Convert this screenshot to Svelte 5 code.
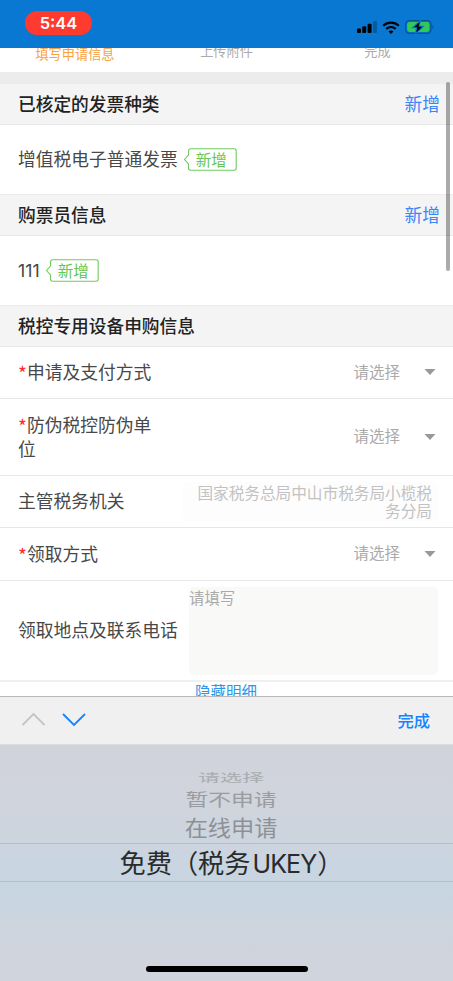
<script lang="ts">
	interface Section {
		title: string;
		item?: string;
	}

	interface Option {
		text: string;
		latin?: string;
		end?: string;
		level: string;
	}

	const sections: Section[] = [
		{ title: "已核定的发票种类", item: "增值税电子普通发票" },
		{ title: "购票员信息", item: "111" },
	];

	const options: Option[] = [
		{ text: "请选择", level: "far" },
		{ text: "暂不申请", level: "mid" },
		{ text: "在线申请", level: "near" },
		{ text: "免费（税务", latin: "UKEY", end: "）", level: "current" },
	];

	let selected = $state(3);
</script>

{#snippet selectRow(label: string, tall: boolean)}
	<div class="row" class:tall>
		<div class="label narrow"><span class="required">*</span>{label}</div>
		<div class="select">
			<span>请选择</span>
			<svg width="12" height="6" viewBox="0 0 12 6"><path d="M0.5 0h11L6 6z" fill="#999" /></svg>
		</div>
	</div>
{/snippet}

<div class="screen">
	<header class="status">
		<span class="time">5:44</span>
		<div class="indicators">
			<svg width="20" height="12" viewBox="0 0 20 12">
				<rect x="0" y="7.5" width="4" height="4.5" rx="1" />
				<rect x="5.2" y="5.3" width="4" height="6.7" rx="1" />
				<rect x="10.6" y="2.7" width="4" height="9.3" rx="1" />
				<rect x="16" y="0" width="4" height="12" rx="1" opacity="0.25" />
			</svg>
			<svg width="18" height="13" viewBox="0 0 18 13" fill="none" stroke="#000" stroke-width="2.2">
				<path d="M1.2 4.7a11.2 11.2 0 0 1 15.6 0" />
				<path d="M4.3 7.9a6.8 6.8 0 0 1 9.4 0" />
				<path d="M6.5 10.6a3.7 3.7 0 0 1 5 0L9 13z" fill="#000" stroke="none" />
			</svg>
			<svg width="29" height="14" viewBox="0 0 29 14">
				<rect x="0.6" y="0.6" width="25.4" height="12.8" rx="3.8" fill="none" stroke="#075391" stroke-width="1.2" />
				<rect x="2.2" y="2.1" width="22.2" height="9.8" rx="2.3" fill="#32c95b" />
				<path d="M27.4 5c1.5.6 1.5 3.4 0 4z" fill="#075391" />
				<path d="M15.2 0.7 7.7 7.7h4l-1.2 6 7.7-7.3h-4.1z" stroke="#0878d3" stroke-width="1.3" />
				<path d="M14.7 2 9 7.3h3.7l-1.5 5.2 5.9-5.7h-3.8z" />
			</svg>
		</div>
	</header>

	<nav class="steps">
		<span class="active">填写申请信息</span>
		<span>上传附件</span>
		<span>完成</span>
	</nav>

	<main class="form">
		{#each sections as section}
			<div class="heading">
				<span>{section.title}</span>
				<button class="add">新增</button>
			</div>
			<div class="entry">
				<span class="label">{section.item}</span>
				<span class="tag">
					<svg width="54" height="23" viewBox="0 0 54 23" fill="none" stroke="#72ca5f" stroke-width="1.1">
						<path d="M5.5 7V3Q5.5 .8 7.7 .8H51q2.2 0 2.2 2.2v17q0 2.2-2.2 2.2H7.7q-2.2 0-2.2-2.2v-4L1.5 11.5z" />
					</svg>
					<span>新增</span>
				</span>
			</div>
		{/each}

		<div class="heading"><span>税控专用设备申购信息</span></div>
		{@render selectRow("申请及支付方式", false)}
		{@render selectRow("防伪税控防伪单位", true)}
		<div class="row">
			<div class="label">主管税务机关</div>
			<div class="office">国家税务总局中山市税务局小榄税务分局</div>
		</div>
		{@render selectRow("领取方式", false)}
		<div class="row address">
			<div class="label">领取地点及联系电话</div>
			<div class="textarea">请填写</div>
		</div>
		<div class="toggle">隐藏明细</div>
	</main>
	<div class="scrollbar"></div>

	<div class="toolbar">
		<svg width="66" height="14" viewBox="0 0 66 14" fill="none" stroke-width="1.8">
			<path d="M1.5 12 12.5 1l11 11" stroke="#c4c4c5" />
			<path d="m42 1 11 11 11-11" stroke="#1583ff" />
		</svg>
		<button class="done">完成</button>
	</div>

	<div class="picker">
		{#each options as option, i}
			<div class="option {option.level}" class:selected={i === selected}>
				<span>{option.text}{#if option.latin}<span class="latin">{option.latin}</span>{/if}{option.end ?? ""}</span>
			</div>
		{/each}
		<div class="home"></div>
	</div>
</div>

<style>
	:global(body) {
		margin: 0;
	}

	.screen {
		position: relative;
		width: 453px;
		height: 981px;
		display: flex;
		flex-direction: column;
		overflow: hidden;
		background: #fff;
		color: #484848;
		font-family: Inter, "Noto Sans CJK SC", sans-serif;
	}

	.screen * {
		box-sizing: border-box;
	}

	button {
		padding: 0;
		border: none;
		background: none;
		font-family: inherit;
	}

	.status {
		flex: none;
		height: 48px;
		padding: 11px 19px 0 25px;
		display: flex;
		justify-content: space-between;
		background: #0878d3;
	}

	.time {
		width: 67px;
		height: 24px;
		border-radius: 12px;
		background: #ff3b30;
		color: #fff;
		font-size: 16.5px;
		font-weight: 600;
		line-height: 24px;
		text-align: center;
	}

	.indicators {
		display: flex;
		align-items: center;
		gap: 5px;
		height: 32px;
	}

	.steps {
		flex: none;
		height: 36px;
		display: grid;
		grid-template-columns: repeat(3, 1fr);
		border-bottom: 12px solid #ececec;
		overflow: hidden;
		color: #aaa;
		font-size: 13.2px;
		line-height: 18px;
		text-align: center;
	}

	.steps span {
		margin-top: -6px;
	}

	.steps .active {
		margin-top: -3px;
		padding-right: 1px;
		color: #f9a13f;
	}

	.form {
		flex: none;
		height: 612px;
		overflow: hidden;
	}

	.heading {
		height: 41px;
		padding: 2px 13px 0 18px;
		display: flex;
		align-items: center;
		justify-content: space-between;
		background: #f4f4f4;
		border-bottom: 1px solid #e8e8e8;
		color: #222;
		font-size: 17.7px;
		font-weight: 500;
		line-height: 24px;
	}

	.heading:not(:first-child) {
		height: 42px;
		border-top: 1px solid #ececec;
	}

	.add {
		color: #3d84f7;
		font-size: 17.7px;
		line-height: 24px;
	}

	.entry {
		height: 69px;
		padding-left: 18px;
		display: flex;
		align-items: center;
		gap: 5px;
	}

	.label {
		padding-top: 2px;
		font-size: 17.75px;
		line-height: 24px;
	}

	.entry .label {
		padding-top: 1px;
	}

	.tag {
		display: grid;
		height: 23px;
	}

	.tag > * {
		grid-area: 1 / 1;
	}

	.tag > span {
		padding: 1px 0 0 13px;
		color: #66c653;
		font-size: 15.5px;
		line-height: 23px;
	}

	.row {
		height: 52px;
		padding: 0 15px 1px 18px;
		display: flex;
		align-items: center;
		justify-content: space-between;
		border-bottom: 1px solid #e7e7e7;
	}

	.row.tall {
		height: 77px;
	}

	.row:nth-last-child(3) {
		height: 53px;
	}

	.narrow {
		width: 142px;
	}

	.required {
		display: inline-block;
		height: 12px;
		color: #fe2d2d;
		font-family: "Noto Sans CJK SC", sans-serif;
		font-size: 19px;
		line-height: 19px;
		vertical-align: -2px;
	}

	.select {
		display: flex;
		align-items: center;
		gap: 24px;
		margin-right: 2px;
		color: #aaa;
		font-size: 15.5px;
		line-height: 20px;
	}

	.select span {
		margin-top: 1px;
	}

	.office {
		width: 256px;
		height: 39px;
		margin-right: -1px;
		padding: 3px 7px 0 0;
		border-radius: 5px;
		background: #fdfdfd;
		color: #c2c2c2;
		font-size: 15.65px;
		line-height: 18px;
		text-align: right;
	}

	.row.address {
		height: 101px;
		border-bottom-width: 2px;
		border-color: #f0f0f0;
	}

	.textarea {
		width: 249px;
		height: 88px;
		padding-top: 1px;
		margin-top: 1px;
		border-radius: 5px;
		background: #f9f9f8;
		color: #aaa;
		font-size: 15.4px;
		line-height: 22px;
	}

	.toggle {
		padding: 1px 1px 0 0;
		color: #2c96e8;
		font-size: 15.5px;
		line-height: 20px;
		text-align: center;
	}

	.scrollbar {
		position: absolute;
		top: 82px;
		right: 3px;
		width: 4px;
		height: 189px;
		border-radius: 2px;
		background: rgba(0, 0, 0, 0.33);
	}

	.toolbar {
		flex: none;
		height: 48px;
		padding: 0 23px 1px 21px;
		display: flex;
		align-items: center;
		justify-content: space-between;
		border-top: 1px solid #b9b9b9;
		background: #f0f0f0;
	}

	.done {
		color: #1583ff;
		font-size: 16.3px;
		font-weight: 500;
	}

	.picker {
		flex: 1;
		display: flex;
		flex-direction: column;
		align-items: center;
		padding-top: 25px;
		border-top: 1px solid #dcdde1;
		background: linear-gradient(#d0d3db 0, #d0d4dc 25%, #c9d5e1 52%, #c7d5e2 62%, #cdd5de 75%, #d0d4dc 90%);
	}

	.option {
		display: flex;
		align-items: center;
		justify-content: center;
		width: 100%;
		padding-left: 9px;
		white-space: nowrap;
		color: #8d9196;
	}

	/* rows flatten as they roll away from the selection */
	.far {
		height: 14px;
		color: #a9acb1;
		font-size: 22px;
	}

	.far > span {
		transform: scaleY(0.52);
	}

	.mid {
		height: 28px;
		font-size: 22.8px;
		color: #999ca1;
	}

	.mid > span {
		transform: scaleY(0.76);
	}

	.near {
		height: 31px;
		padding-bottom: 2px;
		font-size: 23.2px;
	}

	.near > span {
		transform: scaleY(0.94);
	}

	.selected {
		height: 39px;
		padding: 0 0 2px 10px;
		border: solid #b1bfca;
		border-width: 1px 0;
		color: #292b2c;
		font-size: 26.2px;
	}

	.latin {
		margin: 0 1px 0 2px;
		font-size: 25px;
		letter-spacing: -0.9px;
	}

	.home {
		width: 162px;
		height: 6px;
		margin-top: auto;
		margin-bottom: 9px;
		border-radius: 3px;
		background: #000;
	}
</style>
